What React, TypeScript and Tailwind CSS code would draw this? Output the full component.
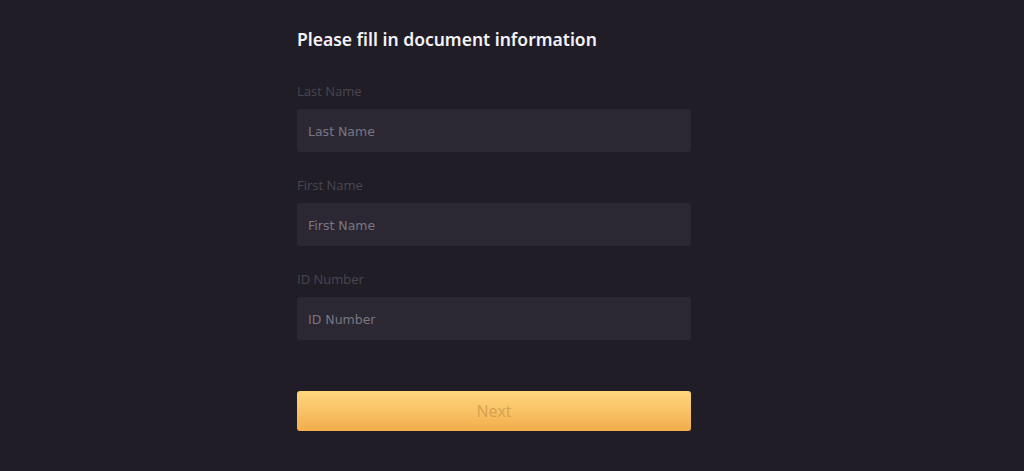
import React from "react";

function Field({ label }: { label: string }) {
  return (
    <div className="flex flex-col">
      <div className="h-[20px] text-[13px] leading-[20px] text-[#4a4652] font-['Open_Sans',sans-serif]">
        {label}
      </div>
      <input
        placeholder={label}
        className="mt-[8px] h-[43px] w-full rounded-[3px] bg-[#2b2833] px-[11px] pt-[2px] text-[12.5px] text-[#d0ccd6] outline-none placeholder:text-[#7a7682] font-['DejaVu_Sans',sans-serif]"
      />
    </div>
  );
}

export default function App() {
  return (
    <div className="min-h-[471px] w-full bg-[#201d27] flex justify-center pr-[36px]">
      <div className="w-[394px] pt-[26px] flex flex-col">
        <h1 className="h-[26px] text-[17.5px] leading-[26px] font-semibold text-[#f4f2f6] font-['Noto_Sans',sans-serif]">
          Please fill in document information
        </h1>
        <div className="mt-[29px] flex flex-col gap-[23px]">
          <Field label="Last Name" />
          <Field label="First Name" />
          <Field label="ID Number" />
        </div>
        <button className="mt-[51px] h-[40px] w-full rounded-[3px] bg-gradient-to-b from-[#ffd67e] to-[#f2ae4b] text-[16px] text-[#d5a04f] font-['Open_Sans',sans-serif]">
          Next
        </button>
      </div>
    </div>
  );
}
